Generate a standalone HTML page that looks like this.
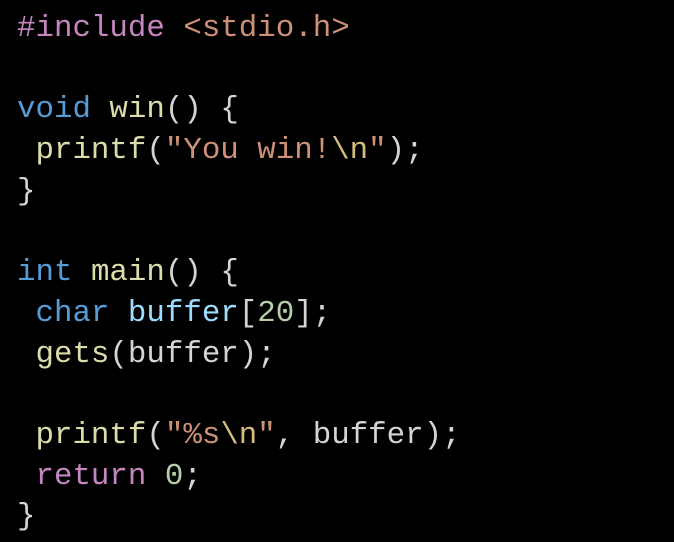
<!DOCTYPE html>
<html><head><style>
html,body{margin:0;padding:0;background:#000;width:674px;height:542px;overflow:hidden}
pre{margin:0;padding:9px 0 0 17px;font-family:"Liberation Mono",monospace;font-size:30.8px;line-height:40.7px;color:#d4d4d4}
.k{color:#c586c0}.s{color:#ce9178}.t{color:#569cd6}.f{color:#dcdcaa}.e{color:#d7ba7d}.v{color:#9cdcfe}.n{color:#b5cea8}
</style></head><body><pre><span class="k">#include</span> <span class="s">&lt;stdio.h&gt;</span>

<span class="t">void</span> <span class="f">win</span>() {
 <span class="f">printf</span>(<span class="s">"You win!</span><span class="e">\n</span><span class="s">"</span>);
}

<span class="t">int</span> <span class="f">main</span>() {
 <span class="t">char</span> <span class="v">buffer</span>[<span class="n">20</span>];
 <span class="f">gets</span>(buffer);

 <span class="f">printf</span>(<span class="s">"%s</span><span class="e">\n</span><span class="s">"</span>, buffer);
 <span class="k">return</span> <span class="n">0</span>;
}</pre></body></html>
